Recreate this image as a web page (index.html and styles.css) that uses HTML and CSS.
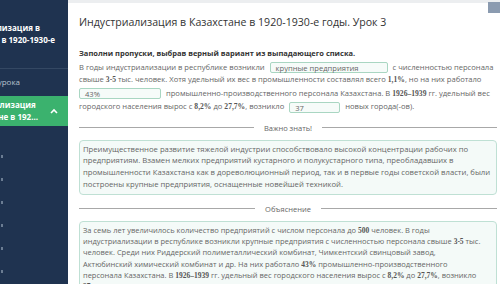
FILE: index.html
```html
<!DOCTYPE html>
<html>
<head>
  <meta charset="UTF-8">
  <title>Урок 3</title>
  <link rel="stylesheet" href="styles.css">
</head>
<body>
  <div class="app">
    <aside class="sidebar">
      <div class="side-title">
        <div class="side-line line-a"><span>Индустриализация в</span></div>
        <div class="side-line line-b"><span>Казахстане в 1920-1930-е</span></div>
      </div>
      <div class="side-line side-link"><span>Цели урока</span></div>
      <div class="side-active">
        <div class="side-active-text">
          <div>Индустриализация</div>
          <div>в Казахстане в 192...</div>
        </div>
        <span class="chevron">
          <svg width="8" height="6" viewBox="0 0 8 6"><path d="M1 5 L4 2 L7 5" fill="none" stroke="#fff" stroke-width="1.6"/></svg>
        </span>
      </div>
      <div class="side-items">
        <div class="side-item"></div>
        <div class="side-item"></div>
        <div class="side-item"></div>
        <div class="side-item"></div>
        <div class="side-item"></div>
        <div class="side-item"></div>
      </div>
    </aside>

    <main class="content">
      <div class="topbar"><span class="corner"></span></div>
      <h1>Индустриализация в Казахстане в 1920-1930-е годы. Урок 3</h1>

      <p class="task">Заполни пропуски, выбрав верный вариант из выпадающего списка.</p>

      <p class="text">
        В годы индустриализации в республике возникли <span class="blank wide">крупные предприятия</span> с численностью персонала<br>
        свыше <b>3-5</b> тыс. человек. Хотя удельный их вес в промышленности составлял всего <b>1,1%</b>, но на них работало<br>
        <span class="blank mid first">43%</span> промышленно-производственного персонала Казахстана. В <b>1926–1939</b> гг. удельный вес<br>
        городского населения вырос с <b>8,2%</b> до <b>27,7%</b>, возникло <span class="blank short">37</span> новых города(-ов).
      </p>

      <div class="divider"><span>Важно знать!</span></div>
      <div class="note important">
        Преимущественное развитие тяжелой индустрии способствовало высокой концентрации рабочих по<br>
        предприятиям. Взамен мелких предприятий кустарного и полукустарного типа, преобладавших в<br>
        промышленности Казахстана как в дореволюционный период, так и в первые годы советской власти, были<br>
        построены крупные предприятия, оснащенные новейшей техникой.
      </div>

      <div class="divider"><span>Объяснение</span></div>
      <div class="note">
        За семь лет увеличилось количество предприятий с числом персонала до <b>500</b> человек. В годы<br>
        индустриализации в республике возникли крупные предприятия с численностью персонала свыше <b>3-5</b> тыс.<br>
        человек. Среди них Риддерский полиметаллический комбинат, Чимкентский свинцовый завод,<br>
        Актюбинский химический комбинат и др. На них работало <b>43%</b> промышленно-производственного<br>
        персонала Казахстана. В <b>1926–1939</b> гг. удельный вес городского населения вырос с <b>8,2%</b> до <b>27,7%</b>, возникло<br>
        <b>37</b> новых городов.
      </div>
    </main>
  </div>
</body>
</html>
```

FILE: styles.css
```css
body {
  margin: 0;
  font-family: "Open Sans", "Noto Sans", sans-serif;
  background-color: #fff;
  color: #555;
}
.app {
  display: flex;
  width: 500px;
  height: 284px;
  overflow: hidden;
}
.sidebar {
  width: 68px;
  flex-shrink: 0;
  background-color: #1f3350;
  overflow: hidden;
  white-space: nowrap;
}
.side-line {
  display: flex;
  justify-content: flex-end;
}
.side-line span {
  flex-shrink: 0;
}
.side-title {
  color: #fff;
  font-weight: 700;
  font-size: 8px;
  line-height: 12px;
  padding-top: 22px;
  height: 46px;
  border-bottom: 1px solid #344863;
}
.line-a {
  padding-right: 28px;
}
.line-b {
  padding-right: 13px;
}
.side-link {
  color: #b8c2ce;
  font-size: 8px;
  line-height: 12px;
  padding: 7px 48px 8px 0;
}
.side-active {
  background-color: #3bb26e;
  height: 30px;
  display: flex;
  align-items: center;
  justify-content: flex-end;
  gap: 12px;
  padding-right: 10px;
}
.side-active-text {
  color: #fff;
  font-weight: 700;
  font-size: 8px;
  line-height: 12px;
  flex-shrink: 0;
}
.chevron {
  display: flex;
  flex-shrink: 0;
}
.side-items {
  padding-top: 29px;
}
.side-item {
  width: 2px;
  height: 3px;
  background-color: #6b7d93;
  margin: 0 0 20px 1px;
}
.content {
  flex: 1;
  padding: 0 3px 0 11px;
}
.topbar {
  height: 3px;
  background-color: #eceef0;
  margin: 0 -3px 0 -11px;
  position: relative;
}
.corner {
  position: absolute;
  right: 0;
  top: 2px;
  width: 12px;
  height: 11px;
  background-color: #8b9bb0;
}
h1 {
  font-size: 10.6px;
  font-weight: 400;
  color: #333;
  margin: 12px 0 0;
  line-height: 15px;
}
.task {
  font-size: 7.5px;
  font-weight: 700;
  color: #333;
  margin: 18px 0 0;
}
.text {
  font-size: 7.6px;
  line-height: 12.4px;
  margin: 3px 0 0;
  color: #666;
  white-space: nowrap;
}
.text b, .note b {
  font-family: "Liberation Serif", serif;
  font-weight: 700;
  color: #555;
}
.blank {
  display: inline-block;
  height: 11px;
  line-height: 10px;
  border: 1px solid #a9d6c2;
  border-radius: 2px;
  background-color: #f6fbf9;
  padding: 0 5px;
  vertical-align: middle;
  margin: 0 3px;
  box-sizing: border-box;
}
.blank.first { margin-left: 0; }
.blank.wide { width: 118px; }
.blank.mid { width: 82px; }
.blank.short { width: 51px; }
.divider {
  display: flex;
  align-items: center;
  gap: 10px;
  font-size: 7.5px;
  color: #666;
  margin: 9px 0 7px;
}
.divider::before, .divider::after {
  content: "";
  flex: 1;
  height: 1px;
  background-color: #a8a8a8;
}
.note {
  border: 1px solid #bfe0d4;
  border-radius: 4px;
  background-color: #f4faf8;
  padding: 3px 3px;
  font-size: 7.5px;
  line-height: 11.3px;
  color: #666;
  white-space: nowrap;
  overflow: hidden;
}
.note.important {
  font-size: 7.7px;
  line-height: 11.8px;
}
```
